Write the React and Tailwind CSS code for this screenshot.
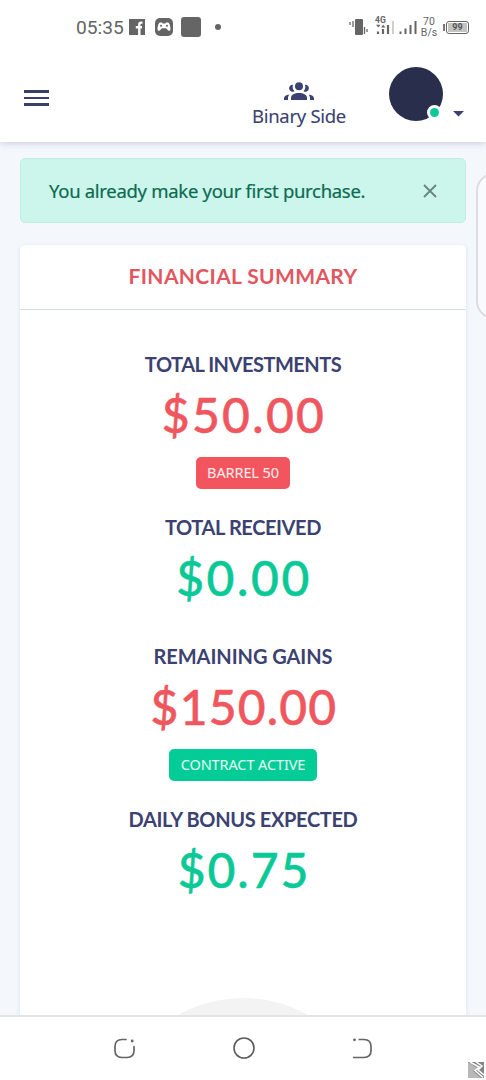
import React, { useState } from 'react';

const stats = [
    { label: 'TOTAL INVESTMENTS', value: '$50.00', labelStyle: 'tracking-[-0.5px]', valueStyle: 'text-[#ef565e] tracking-[2.3px]', badge: 'BARREL 50', badgeStyle: 'bg-[#f2555d] w-[94px]', height: 'h-[163px]' },
    { label: 'TOTAL RECEIVED', value: '$0.00', labelStyle: 'tracking-[-0.4px]', valueStyle: 'text-[#0ac997] tracking-[2.6px]', height: 'h-[129px]' },
    { label: 'REMAINING GAINS', value: '$150.00', labelStyle: 'tracking-[-0.050px]', valueStyle: 'text-[#ef565e] tracking-[1.2px]', badge: 'CONTRACT ACTIVE', badgeStyle: 'bg-[#04cc96] w-[148px]', height: 'h-[163px]' },
    { label: 'DAILY BONUS EXPECTED', value: '$0.75', labelStyle: 'tracking-[-0.35px]', valueStyle: 'text-[#0ac997] tracking-[2px]', height: 'h-[130px]' },
];

const StatusBar = () => (
    <div className="h-[54px] shrink-0 flex items-center pl-[76px] pr-[17px] text-[#656565] font-[Roboto,sans-serif]">
        <span className="text-[19.2px] leading-none w-[53px] whitespace-nowrap relative top-px">05:35</span>
        {/* Facebook */}
        <svg width="16" height="16" viewBox="0 0 16 16">
            <rect width="16" height="16" fill="#656565" />
            <path d="M13.500 3.600h-1.300q-1.900 0-1.900 2V16M6.800 8.200h6.200" fill="none" stroke="#fff" strokeWidth="2.400" />
        </svg>
        {/* Game controller */}
        <svg className="ml-[10px]" width="18" height="18" viewBox="0 0 18 18">
            <rect width="18" height="18" rx="5" fill="#656565" />
            <path fill="#fff" d="M5 4.500h1.800l1 1h2.400l1-1H13c1.500 0 3 5.500 2.300 7.500-.4 1.200-1.500 1-2.300.2L11 10.300H7l-2 1.900c-.8.8-1.900 1-2.300-.2C2 10 3.500 4.500 5 4.500z" />
            <circle cx="6" cy="7.800" r="1" fill="#656565" />
            <circle cx="12" cy="7.800" r="1" fill="#656565" />
        </svg>
        <div className="ml-2 w-5 h-5 rounded-[3px] bg-[#656565]" />
        <div className="ml-[14px] w-[6px] h-[6px] rounded-full bg-[#656565]" />

        <div className="ml-auto flex items-center">
            {/* Vibrate */}
            <svg width="19" height="18" viewBox="0 0 19 18">
                <rect x="6" y="1" width="8" height="16" rx="1" fill="#656565" />
                <path d="M1 4v3M4 3v6M15.500 9v7M18 11v3" stroke="#656565" strokeWidth="1.300" />
            </svg>
            {/* Mobile signal, 4G */}
            <div className="relative ml-[7px] w-5 h-5">
                <svg width="20" height="20" viewBox="0 0 20 20">
                    <path d="M3 14.500v2.500M8 12v5M13 8v9" stroke="#656565" strokeWidth="2.200" />
                    <path d="M18 4v13" stroke="#cfcfcf" strokeWidth="2" />
                    <path d="M1 7.800h4.500l-2.200 2.700zM6 10.500l2.200-2.700 2.200 2.700z" fill="#656565" />
                </svg>
                <span className="absolute left-0 top-[-1px] text-[8.5px] leading-[8px] font-bold">4G</span>
            </div>
            <svg className="ml-[4px]" width="18" height="20" viewBox="0 0 18 20">
                <path d="M1.500 14.500v2.500M6.500 11.500V17M11.500 8v9M16.500 4v13" stroke="#656565" strokeWidth="2" />
            </svg>
            <div className="ml-[3px] w-[18px] text-center text-[10.5px] leading-[11px] whitespace-nowrap">
                <div>70</div>
                <div>B/s</div>
            </div>
            {/* Battery */}
            <div className="ml-[5px] w-[2px] h-[7px] bg-[#777]" />
            <div className="ml-px w-[23px] h-[13px] rounded-[3px] border border-[#666] p-px">
                <div className="h-full bg-[#c4c4c4] text-[9px] leading-[9px] text-center font-bold text-[#555]">99</div>
            </div>
        </div>
    </div>
);

const TopBar = () => (
    <div className="relative h-[88px] shrink-0 flex items-start pl-6 pr-[22px]">
        <div className="mt-9 w-[25px] flex flex-col gap-[4px]">
            <div className="h-[2.700px] bg-[#3b3f68]" />
            <div className="h-[2.700px] bg-[#3b3f68]" />
            <div className="h-[2.700px] bg-[#3b3f68]" />
        </div>
        <div className="ml-[202px] mt-[28px] w-[96px] flex flex-col items-center text-[#3b4272]">
            <svg width="30" height="18" viewBox="0 0 30 18" fill="currentColor">
                <circle cx="15" cy="4.200" r="4" />
                <path d="M7 18v-2c0-3.500 3.500-5 8-5s8 1.500 8 5v2z" />
                <path d="M9 2.800a6.500 6.500 0 0 0 1.500 6.400A3.500 3.500 0 1 1 9 2.800zM21 2.800a6.500 6.500 0 0 1-1.500 6.400A3.500 3.500 0 1 0 21 2.800z" />
                <path d="M0 18v-1.500c0-2.200 2-3.600 5.500-4C4.500 13.500 4 14.700 4 16v2zM30 18v-1.500c0-2.200-2-3.600-5.500-4 1 1 1.500 2.200 1.500 3.500v2z" />
            </svg>
            <span className="mt-[3px] text-[18.500px] leading-[26px] whitespace-nowrap tracking-[-0.3px] [-webkit-text-stroke:0.1px]">Binary Side</span>
        </div>
        <div className="relative ml-[42px] mt-[13px] w-[54px] h-[54px] rounded-full bg-[#292e4c]">
            <div className="absolute left-[38px] top-[38px] w-[15px] h-[15px] rounded-full bg-[#0ac997] border-[3px] border-white" />
        </div>
        <svg className="ml-[10px] mt-[57px]" width="11" height="6" viewBox="0 0 11 6">
            <path d="M0 0h11L5.500 5.500z" fill="#3b4272" />
        </svg>
    </div>
);

const NavBar = () => (
    <div className="relative h-[65px] shrink-0 bg-white border-t-2 border-[#e2e4e6] flex items-center justify-center gap-[98px] pb-px pr-px">
        <svg width="21" height="21" viewBox="0 0 21 21" fill="none" stroke="#656565" strokeWidth="1.700" strokeLinecap="round">
            <path d="M12 1.500H8Q1 1.500 1 8.500V12.500Q1 19.500 8 19.500H13Q20 19.500 20 12.500V8.500" />
            <circle cx="18.200" cy="3" r="1.400" fill="#656565" stroke="none" />
        </svg>
        <svg width="22" height="22" viewBox="0 0 22 22" fill="none" stroke="#5c5c5c" strokeWidth="1.600">
            <circle cx="11" cy="11" r="10" />
        </svg>
        <svg width="19" height="21" viewBox="0 0 19 21" fill="none" stroke="#656565" strokeWidth="1.700">
            <path d="M5.500 1.500H11Q18 1.500 18 8.500V12.500Q18 19.500 11 19.500H0" />
            <circle cx="1.500" cy="1.800" r="1.400" fill="#656565" stroke="none" />
        </svg>
        <svg className="absolute left-[468px] top-[45px]" width="16" height="16" viewBox="0 0 16 16">
            <rect width="16" height="16" fill="#858585" />
            <path d="M0 0v16h13L5 9l4-3L0 0z" fill="#b8b8b8" />
            <path d="M2 0l9 5-4 3.500 8 7M8 0l6 4-4 4 6 5" fill="none" stroke="#fff" strokeWidth="1.500" />
        </svg>
    </div>
);

const App = () => {
    const [showAlert, setShowAlert] = useState(true);

    return (
        <div className="w-[486px] h-[1080px] flex flex-col overflow-hidden bg-white font-['Noto_Sans',sans-serif]">
            <div className="relative z-10 bg-white shadow-[0_1px_7px_rgba(60,70,130,0.25)]">
                <StatusBar />
                <TopBar />
            </div>

            <main className="relative flex-1 min-h-0 overflow-hidden bg-[#f4f7fc] px-5 pt-4">
                {showAlert && (
                    <div className="h-[65px] rounded-[5px] border border-[#bcefe1] bg-[#ccf5eb] flex items-center justify-between pl-7 pr-7">
                        <span className="text-[18.500px] text-[#0b6b50] whitespace-nowrap tracking-[-0.3px] [-webkit-text-stroke:0.2px]">You already make your first purchase.</span>
                        <button onClick={() => setShowAlert(false)} className="p-0">
                            <svg width="14" height="14" viewBox="0 0 14 14" stroke="#66857c" strokeWidth="1.800">
                                <path d="M1 1l12 12M13 1L1 13" />
                            </svg>
                        </button>
                    </div>
                )}

                {/* Summary card */}
                <div className="mt-[22px] h-[800px] rounded-t-[5px] bg-white shadow-[0_1px_4px_rgba(60,70,130,0.12)] overflow-hidden">
                    <div className="h-[65px] pb-[2px] border-b border-[#d9e0e2] flex items-center justify-center font-[Lato,sans-serif] text-[21px] font-bold text-[#e2575f] whitespace-nowrap tracking-[0.35px]">FINANCIAL SUMMARY</div>
                    <div className="pt-[40px] flex flex-col items-center font-[Lato,sans-serif]">
                        {stats.map(s => (
                            <div key={s.label} className={`${s.height} flex flex-col items-center whitespace-nowrap`}>
                                <div className={`text-[20px] leading-[28px] font-bold text-[#3b4272] ${s.labelStyle}`}>{s.label}</div>
                                <div className={`mt-[7px] pl-[2px] text-[48px] leading-[60px] font-medium [-webkit-text-stroke:0.5px] ${s.valueStyle}`}>{s.value}</div>
                                {s.badge && (
                                    <div className={`mt-[12px] h-[32px] rounded-[5px] flex items-center justify-center font-['Noto_Sans',sans-serif] text-[14.500px] tracking-[-0.1px] text-white/90 ${s.badgeStyle}`}>{s.badge}</div>
                                )}
                            </div>
                        ))}
                        <div className="mt-[63px] w-[264px] h-[264px] shrink-0 rounded-full bg-[#f3f3f3]" />
                    </div>
                </div>

                {/* Edge panel handle */}
                <div className="absolute left-[476px] top-[31px] w-[40px] h-[146px] rounded-[18px] border-2 border-[#dcdde3] bg-[#f9fafe]" />
            </main>

            <NavBar />
        </div>
    );
};

export default App;
